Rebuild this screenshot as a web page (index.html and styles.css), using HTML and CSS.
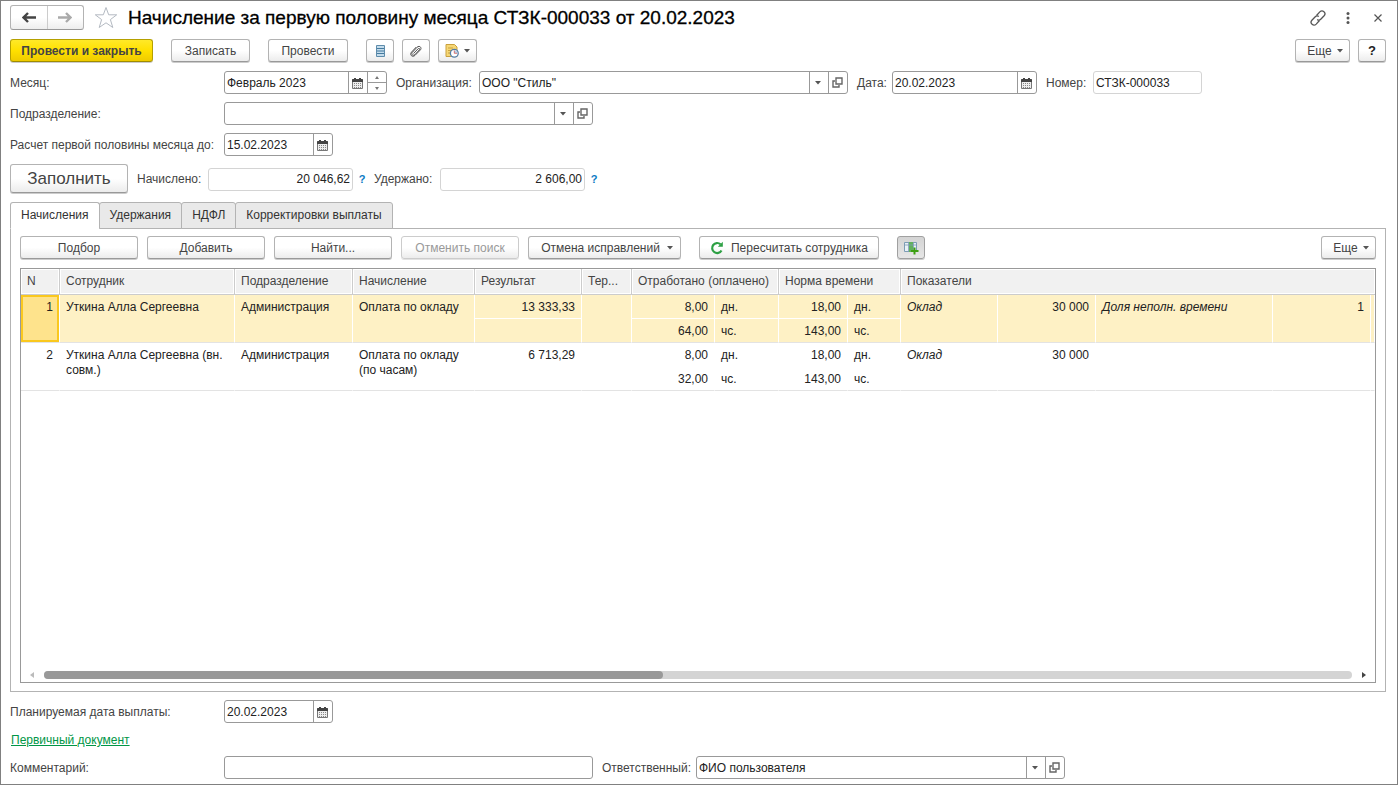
FILE: index.html
```html
<!DOCTYPE html>
<html lang="ru">
<head>
<meta charset="utf-8">
<title>Начисление за первую половину месяца</title>
<link rel="stylesheet" href="styles.css">
</head>
<body>
<svg class="defs" aria-hidden="true">
  <symbol id="calendar" viewBox="0 0 11 12">
    <path d="M1 2h9a1 1 0 0 1 1 1v8a1 1 0 0 1-1 1H1a1 1 0 0 1-1-1V3a1 1 0 0 1 1-1z" fill="#777"/>
    <path d="M0 5V3a1 1 0 0 1 1-1h9a1 1 0 0 1 1 1v2z" fill="#444"/>
    <path d="M1 5h9v6H1z" fill="#eee"/>
    <path d="M2 1h2v2H2zM7 1h2v2H7z" fill="#444"/>
    <path d="M2 6.500h7M2 8.500h7M2 10.500h7" stroke="#888" stroke-dasharray="1 1"/>
  </symbol>
  <symbol id="open" viewBox="0 0 11 11">
    <path d="M4 1h6v6H4zM3 4H1v6h6V8" fill="none" stroke="#666" stroke-width="1.400"/>
  </symbol>
  <symbol id="caret" viewBox="0 0 6 4"><path d="M0 0h6L3 3.500z" fill="#555"/></symbol>
</svg>
<main class="window">
  <header class="titlebar">
    <div class="nav">
      <button class="nav-btn" aria-label="Назад"><svg width="14" height="11" viewBox="0 0 14 11"><path d="M14 5.500H2M6 1L1.500 5.500 6 10" fill="none" stroke="#444" stroke-width="2.400"/></svg></button>
      <button class="nav-btn" aria-label="Вперед"><svg width="14" height="11" viewBox="0 0 14 11"><path d="M0 5.500h12M8 1l4.500 4.500L8 10" fill="none" stroke="#aaa" stroke-width="2.400"/></svg></button>
    </div>
    <button class="plain" aria-label="В избранное"><svg width="24" height="23" viewBox="0 0 24 23"><path d="M12 1.500l2.700 7.300h8l-6.300 4.800 2.400 7.900L12 16.800l-6.800 4.700 2.400-7.900L1.300 8.800h8z" fill="#fff" stroke="#b4bac2"/></svg></button>
    <h1 class="title">Начисление за первую половину месяца СТЗК-000033 от 20.02.2023</h1>
    <div class="window-tools">
      <button class="plain" aria-label="Ссылка"><svg width="16" height="16" viewBox="0 0 16 16"><g fill="none" stroke="#555" stroke-width="1.300"><path d="M6.500 5.500l3.300-3.600c2.700-2.700 6.900.9 4.300 3.900L11 9c-1.200 1.200-2.800 1.200-3.800.4"/><path d="M9.500 10.500l-3.300 3.600c-2.700 2.700-6.900-.9-4.300-3.900L5 7c1.200-1.200 2.800-1.200 3.800-.4"/></g></svg></button>
      <button class="plain" aria-label="Меню"><svg width="4" height="12" viewBox="0 0 4 12" fill="#555"><circle cx="2" cy="1.500" r="1.500"/><circle cx="2" cy="6" r="1.500"/><circle cx="2" cy="10.500" r="1.500"/></svg></button>
      <button class="plain" aria-label="Закрыть"><svg width="8" height="8" viewBox="0 0 8 8"><path d="M.500.500l7 7M7.500.500l-7 7" stroke="#555" stroke-width="1.200"/></svg></button>
    </div>
  </header>

  <div class="commands">
    <button class="btn btn-primary">Провести и закрыть</button>
    <button class="btn btn-write">Записать</button>
    <button class="btn btn-post">Провести</button>
    <div class="icon-group">
      <button class="btn btn-icon" aria-label="Движения документа"><svg width="9" height="12" viewBox="0 0 9 12"><path d="M.500.500h8v11h-8z" fill="#c4dcec" stroke="#5e8cab"/><path d="M1 3.500h7M1 6h7M1 8.500h7" stroke="#457b9f"/></svg></button>
      <button class="btn btn-icon" aria-label="Присоединенные файлы"><svg width="12" height="12" viewBox="0 0 12 12"><path d="M3.500 8.500l4.700-4.800c.9-.9 2 .2 1.200 1.100L5 9.500c-1.900 1.900-4.400-.2-2.600-2.200L7 2.300C9.200 0 12.300 2.500 10.400 4.900L5.200 10.200C2.300 13 -.7 9.800 1.500 7.100L6.300 2" fill="none" stroke="#555"/></svg></button>
      <button class="btn btn-menu-icon" aria-label="Отчеты"><svg width="14" height="14" viewBox="0 0 14 14"><path d="M1 .500h8.500L12 3v9.500H1z" fill="#f6d775" stroke="#c9a13e"/><path d="M3 4h5M3 6.500h4M3 9h2" stroke="#c9a13e"/><circle cx="9.300" cy="9.300" r="3.900" fill="#fff" stroke="#537ca4" stroke-width="1.300"/><path d="M9.300 9.300V6.200a3.100 3.100 0 0 1 3.100 3.100z" fill="#b9d2ea"/><path d="M9.300 6.500v2.800h2.800" fill="none" stroke="#d3453d" stroke-width=".7"/></svg><svg width="6" height="4"><use href="#caret"/></svg></button>
    </div>
    <div class="commands-end">
      <button class="btn btn-more">Еще <svg width="6" height="4"><use href="#caret"/></svg></button>
      <button class="btn btn-icon btn-help">?</button>
    </div>
  </div>

  <div class="row">
    <label class="label-main" for="month">Месяц:</label>
    <div class="field field-month">
      <input id="month" type="text" value="Февраль 2023">
      <button class="field-btn" aria-label="Выбрать месяц"><svg width="11" height="12"><use href="#calendar"/></svg></button>
      <div class="spinner">
        <button aria-label="Следующий месяц"><svg width="4" height="3" viewBox="0 0 4 3"><path d="M0 3h4L2 0z" fill="#777"/></svg></button>
        <button aria-label="Предыдущий месяц"><svg width="4" height="3" viewBox="0 0 4 3"><path d="M0 0h4L2 3z" fill="#777"/></svg></button>
      </div>
    </div>
    <label class="label-next label-org" for="org">Организация:</label>
    <div class="field field-wide">
      <select id="org"><option>ООО "Стиль"</option></select>
      <span class="field-btn"><svg width="6" height="4"><use href="#caret"/></svg></span>
      <button class="field-btn" aria-label="Открыть организацию"><svg width="11" height="11"><use href="#open"/></svg></button>
    </div>
    <label class="label-next label-date" for="date">Дата:</label>
    <div class="field field-datetime">
      <input id="date" type="text" value="20.02.2023">
      <button class="field-btn" aria-label="Выбрать дату"><svg width="11" height="12"><use href="#calendar"/></svg></button>
    </div>
    <label class="label-next label-number" for="number">Номер:</label>
    <div class="field field-number field-readonly"><input id="number" type="text" value="СТЗК-000033" readonly></div>
  </div>

  <div class="row">
    <label class="label-main" for="dept">Подразделение:</label>
    <div class="field field-wide">
      <select id="dept"><option></option></select>
      <span class="field-btn"><svg width="6" height="4"><use href="#caret"/></svg></span>
      <button class="field-btn" aria-label="Открыть подразделение"><svg width="11" height="11"><use href="#open"/></svg></button>
    </div>
  </div>

  <div class="row">
    <label class="label-main" for="until">Расчет первой половины месяца до:</label>
    <div class="field field-date">
      <input id="until" type="text" value="15.02.2023">
      <button class="field-btn" aria-label="Выбрать дату расчета"><svg width="11" height="12"><use href="#calendar"/></svg></button>
    </div>
  </div>

  <div class="row row-totals">
    <button class="btn btn-fill">Заполнить</button>
    <label class="label-next label-accrued" for="accrued">Начислено:</label>
    <div class="field field-total field-readonly"><input id="accrued" type="text" value="20 046,62" readonly></div>
    <button class="hint" aria-label="Справка: начислено">?</button>
    <label class="label-next label-withheld" for="withheld">Удержано:</label>
    <div class="field field-total field-readonly"><input id="withheld" type="text" value="2 606,00" readonly></div>
    <button class="hint" aria-label="Справка: удержано">?</button>
  </div>

  <div class="tabs" role="tablist">
    <button class="tab tab-active" role="tab" aria-selected="true">Начисления</button>
    <button class="tab" role="tab">Удержания</button>
    <button class="tab" role="tab">НДФЛ</button>
    <button class="tab" role="tab">Корректировки выплаты</button>
  </div>

  <section class="panel">
    <div class="toolbar">
      <button class="btn btn-tool">Подбор</button>
      <button class="btn btn-tool">Добавить</button>
      <button class="btn btn-tool">Найти...</button>
      <button class="btn btn-tool" disabled>Отменить поиск</button>
      <button class="btn btn-undo">Отмена исправлений <svg width="6" height="4"><use href="#caret"/></svg></button>
      <button class="btn btn-recalc"><svg width="14" height="14" viewBox="0 0 14 14"><path d="M11.500 9.500A5 5 0 1 1 10.500 3.300" fill="none" stroke="#2da044" stroke-width="2.200"/><path d="M12.800.800v5H7.800z" fill="#2da044"/></svg>Пересчитать сотрудника</button>
      <button class="btn btn-icon btn-pressed" aria-label="Показать подробности"><svg width="15" height="14" viewBox="0 0 15 14"><path d="M.500 1.500h12v9H.500z" fill="#e9f1f7" stroke="#7d9cb5"/><path d="M5 1h4v10H5z" fill="#62b15c"/><path d="M1 4h12M4.500 1v10M9.500 1v10" stroke="#7d9cb5" stroke-width=".8"/><path d="M10.500 6.500v7M7 10h7.500" stroke="#3d9f12" stroke-width="2"/></svg></button>
      <button class="btn btn-more">Еще <svg width="6" height="4"><use href="#caret"/></svg></button>
    </div>
    <div class="grid">
      <table class="table">
        <colgroup>
          <col class="c-n"><col class="c-employee"><col class="c-dept"><col class="c-accrual"><col class="c-result"><col class="c-terr">
          <col class="c-worked"><col class="c-worked-unit"><col class="c-norm"><col class="c-norm-unit">
          <col class="c-ind"><col class="c-ind-value"><col class="c-share"><col class="c-share-value"><col>
        </colgroup>
        <thead>
          <tr><th>N</th><th>Сотрудник</th><th>Подразделение</th><th>Начисление</th><th>Результат</th><th>Тер...</th><th colspan="2">Отработано (оплачено)</th><th colspan="2">Норма времени</th><th colspan="5">Показатели</th></tr>
        </thead>
        <tbody class="selected">
          <tr><td class="num current" rowspan="2">1</td><td rowspan="2">Уткина Алла Сергеевна</td><td rowspan="2">Администрация</td><td rowspan="2">Оплата по окладу</td><td class="num">13 333,33</td><td rowspan="2"></td><td class="num">8,00</td><td>дн.</td><td class="num">18,00</td><td>дн.</td><td class="ind" rowspan="2">Оклад</td><td class="num" rowspan="2">30 000</td><td class="ind" rowspan="2">Доля неполн. времени</td><td class="num" rowspan="2">1</td><td rowspan="2"></td></tr>
          <tr><td></td><td class="num">64,00</td><td>чс.</td><td class="num">143,00</td><td>чс.</td></tr>
        </tbody>
        <tbody>
          <tr><td class="num" rowspan="2">2</td><td rowspan="2">Уткина Алла Сергеевна (вн. совм.)</td><td rowspan="2">Администрация</td><td rowspan="2">Оплата по окладу (по часам)</td><td class="num">6 713,29</td><td rowspan="2"></td><td class="num">8,00</td><td>дн.</td><td class="num">18,00</td><td>дн.</td><td class="ind" rowspan="2">Оклад</td><td class="num" rowspan="2">30 000</td><td rowspan="2"></td><td rowspan="2"></td><td rowspan="2"></td></tr>
          <tr><td></td><td class="num">32,00</td><td>чс.</td><td class="num">143,00</td><td>чс.</td></tr>
        </tbody>
      </table>
      <div class="scroll">
        <svg width="4" height="6" viewBox="0 0 4 6"><path d="M4 0v6L0 3z" fill="#bbb"/></svg>
        <div class="track"><div class="thumb"></div></div>
        <svg width="4" height="6" viewBox="0 0 4 6"><path d="M0 0v6l4-3z" fill="#444"/></svg>
      </div>
    </div>
  </section>

  <footer class="footer">
    <div class="row">
      <label class="label-main" for="paydate">Планируемая дата выплаты:</label>
      <div class="field field-date">
        <input id="paydate" type="text" value="20.02.2023">
        <button class="field-btn" aria-label="Выбрать дату выплаты"><svg width="11" height="12"><use href="#calendar"/></svg></button>
      </div>
    </div>
    <div class="link-row"><a class="link" href="#">Первичный документ</a></div>
    <div class="row">
      <label class="label-main" for="comment">Комментарий:</label>
      <div class="field field-wide"><input id="comment" type="text"></div>
      <label class="label-next label-resp" for="resp">Ответственный:</label>
      <div class="field field-wide">
        <select id="resp"><option>ФИО пользователя</option></select>
        <span class="field-btn"><svg width="6" height="4"><use href="#caret"/></svg></span>
        <button class="field-btn" aria-label="Открыть ответственного"><svg width="11" height="11"><use href="#open"/></svg></button>
      </div>
    </div>
  </footer>
</main>
</body>
</html>
```
FILE: styles.css
```css
* { box-sizing: border-box; }
body { margin: 0; background: #fff; }
body, button, input, select { font-family: "Liberation Sans", Arial, sans-serif; font-size: 12px; color: #333; }
button { padding: 0; background: none; border: 0; }
svg { display: block; flex: none; }
.defs { position: absolute; width: 0; height: 0; }

.window { display: flex; flex-direction: column; min-height: 100vh; padding: 4px 11px 5px 9px; border: 1px solid #808080; }

.titlebar { display: flex; align-items: center; height: 25px; }
.nav { display: flex; width: 74px; height: 25px; border: 1px solid #b3b3b3; border-bottom-color: #999; border-radius: 3px; background: linear-gradient(#fff 50%, #eee); }
.nav-btn { flex: 1; display: flex; align-items: center; justify-content: center; }
.nav-btn + .nav-btn { border-left: 1px solid #ccc; }
.plain { display: flex; align-items: center; justify-content: center; }
.titlebar > .plain { margin-left: 10px; }
.title { margin: 0 0 0 10px; font-size: 19px; line-height: 24px; font-weight: 400; color: #000; white-space: nowrap; -webkit-text-stroke: 0.3px #000; }
.window-tools { display: flex; align-items: center; margin: 0 -7px 0 auto; }
.window-tools .plain { width: 30px; }

.btn { display: flex; align-items: center; justify-content: center; height: 23px; margin-bottom: 1px; border: 1px solid #b3b3b3; border-bottom-color: #999; border-radius: 3px; background: linear-gradient(#fff 50%, #ececec); box-shadow: 0 1px 0 #ccc; color: #444; white-space: nowrap; }
.btn:disabled { color: #999; border-color: #ccc; box-shadow: 0 1px 0 #e3e3e3; }
.commands { display: flex; gap: 18px; margin-top: 9px; }
.btn-primary { width: 143px; border-color: #b5a000; border-bottom-color: #a08c00; background: linear-gradient(#ffe929, #ffe000 50%, #efcb00); font-weight: 700; }
.btn-write { width: 79px; }
.btn-post { width: 80px; }
.icon-group, .commands-end { display: flex; gap: 8px; }
.commands-end { margin-left: auto; }
.btn-icon { width: 28px; }
.btn-menu-icon { width: 39px; gap: 5px; }
.btn-more { width: 55px; gap: 5px; padding-left: 5px; }
.btn-help { font-size: 13px; font-weight: 700; color: #222; }

.row { display: flex; align-items: center; margin-top: 8px; color: #444; }
.label-main { width: 214px; white-space: nowrap; }
.label-next { margin-left: 9px; white-space: nowrap; }
.label-org { width: 83px; }
.label-date { width: 35px; }
.label-number { width: 47px; }
.label-accrued { width: 71px; }
.label-withheld { width: 66px; }
.label-resp { width: 94px; }

.field { display: flex; height: 23px; border: 1px solid #999; border-radius: 3px; background: #fff; }
.field input, .field select { flex: 1; min-width: 0; width: 0; padding: 0 2px; border: 0; background: none; outline: none; appearance: none; color: #222; }
.field-btn { display: flex; align-items: center; justify-content: center; width: 19px; padding-right: 2px; border-left: 1px solid #999; }
.field-readonly { border-color: #d4d4d4; }
.field-month { width: 163px; }
.field-wide { width: 369px; }
.field-datetime { width: 145px; }
.field-number { width: 109px; }
.field-date { width: 109px; }
.field-total { width: 145px; }
.field-total input { text-align: right; }
.spinner { display: flex; flex-direction: column; width: 19px; border-left: 1px solid #999; }
.spinner button { flex: 1; display: flex; align-items: center; justify-content: center; }
.spinner button + button { border-top: 1px solid #999; }

.btn-fill { width: 118px; height: 29px; font-size: 17px; }
.hint { width: 12px; margin-left: 3px; font-size: 11px; font-weight: 700; color: #0a7ac4; }
.hint + .label-next { margin-left: 6px; }

.tabs { display: flex; margin-top: 8px; position: relative; z-index: 1; }
.tab { height: 27px; padding: 0 10px 1px; margin-left: -1px; border: 1px solid #b3b3b3; border-radius: 3px 3px 0 0; background: #e9e9e9; color: #333; }
.tab-active { margin-left: 0; background: #fff; border-bottom-color: #fff; }

.panel { display: flex; flex-direction: column; flex: 1; margin-top: -1px; padding: 7px 9px 8px; border: 1px solid #b3b3b3; }
.toolbar { display: flex; gap: 9px; }
.btn-tool { width: 118px; }
.btn-undo { width: 153px; gap: 7px; padding-left: 5px; }
.btn-recalc { width: 180px; margin-left: 9px; gap: 7px; }
.btn-pressed { margin-left: 9px; border-color: #a0a0a0; background: linear-gradient(#d4d4d4, #e6e6e6); }
.toolbar .btn-more { margin-left: auto; }

.grid { display: flex; flex-direction: column; flex: 1; margin-top: 8px; border: 1px solid #999; }
.table { width: 100%; table-layout: fixed; border-collapse: separate; border-spacing: 0; line-height: 15px; color: #222; }
.table th { height: 26px; padding: 0 6px 1px; border-right: 1px solid #ccc; border-bottom: 1px solid #ccc; background: #f1f1f1; box-shadow: inset 0 0 0 1px #fff; font-weight: 400; text-align: left; color: #444; white-space: nowrap; }
.table th:last-child { border-right: 0; }
.table td { height: 24px; padding: 5px 6px 0; border-right: 1px solid #fff; vertical-align: top; }
.table td:empty { padding: 0; }
.table td[rowspan], .table tr:nth-child(2) td { border-bottom: 1px solid #e3e3e3; }
.table .num { text-align: right; white-space: nowrap; }
.table .ind { font-style: italic; white-space: nowrap; }
.selected td { background: #fef1c5; }
.selected tr:first-child td:not([rowspan]) { border-bottom: 1px solid #fff; }
.table .current { background: #fee38c; box-shadow: inset 0 0 0 2px #fac81e; }
.c-n { width: 39px; }
.c-employee { width: 175px; }
.c-dept { width: 118px; }
.c-accrual { width: 122px; }
.c-result { width: 107px; }
.c-terr { width: 50px; }
.c-worked { width: 83px; }
.c-worked-unit { width: 64px; }
.c-norm { width: 69px; }
.c-norm-unit { width: 53px; }
.c-ind { width: 97px; }
.c-ind-value { width: 98px; }
.c-share { width: 177px; }
.c-share-value { width: 98px; }

.scroll { display: flex; align-items: center; gap: 10px; margin-top: auto; padding: 0 9px 3px; }
.track { flex: 1; height: 8px; border-radius: 4px; background: #d4d4d4; }
.thumb { width: 47.3%; height: 8px; border-radius: 4px; background: #999; }

.link-row { margin-top: 9px; padding-left: 1px; line-height: 16px; }
.link { color: #009646; }
```
